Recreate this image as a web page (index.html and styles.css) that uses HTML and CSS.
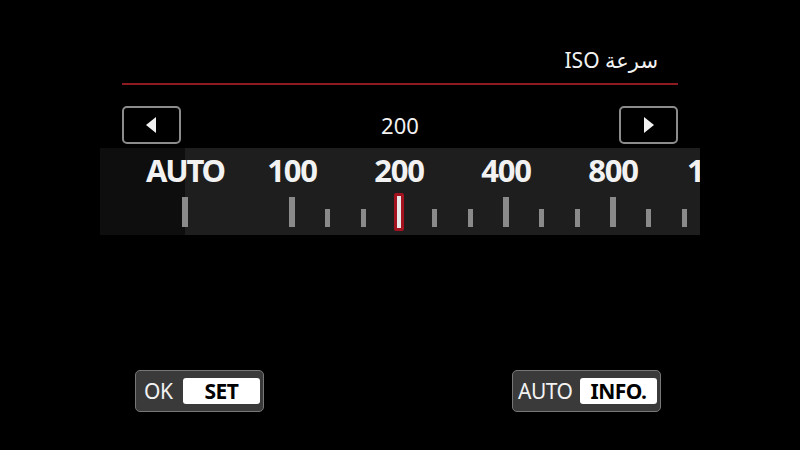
FILE: index.html
```html
<!DOCTYPE html>
<html lang="ar">
  <head>
    <meta charset="utf-8">
    <title>ISO</title>
    <link rel="stylesheet" href="styles.css">
  </head>
  <body>
    <div class="screen">
      <div class="header">
        <span class="title" dir="rtl">سرعة ISO</span>
      </div>
      <div class="nav">
        <div class="arrow-btn"><span class="tri tri-left"></span></div>
        <div class="value">200</div>
        <div class="arrow-btn"><span class="tri tri-right"></span></div>
      </div>
      <div class="band">
        <div class="labels">
          <span class="auto">AUTO</span>
          <span>100</span>
          <span>200</span>
          <span>400</span>
          <span>800</span>
          <span>1600</span>
        </div>
        <div class="ticks">
          <span class="cell"><i class="major"></i></span>
          <span class="cell"></span>
          <span class="cell"></span>
          <span class="cell"><i class="major"></i></span>
          <span class="cell"><i class="minor"></i></span>
          <span class="cell"><i class="minor"></i></span>
          <span class="cell"><i class="cursor"></i></span>
          <span class="cell"><i class="minor"></i></span>
          <span class="cell"><i class="minor"></i></span>
          <span class="cell"><i class="major"></i></span>
          <span class="cell"><i class="minor"></i></span>
          <span class="cell"><i class="minor"></i></span>
          <span class="cell"><i class="major"></i></span>
          <span class="cell"><i class="minor"></i></span>
          <span class="cell"><i class="minor"></i></span>
          <span class="cell"><i class="major"></i></span>
        </div>
      </div>
      <div class="footer">
        <div class="key key-ok">
          <span class="key-label">OK</span>
          <span class="key-box">SET</span>
        </div>
        <div class="key key-auto">
          <span class="key-label">AUTO</span>
          <span class="key-box">INFO.</span>
        </div>
      </div>
    </div>
  </body>
</html>
```

FILE: styles.css
```css
html, body {
  margin: 0;
  padding: 0;
  background: #000;
  color: #f2f2f2;
  font-family: 'Noto Sans', 'DejaVu Sans', sans-serif;
}
.screen {
  width: 800px;
  height: 450px;
  display: flex;
  flex-direction: column;
  overflow: hidden;
}
.header {
  margin: 0 122px;
  padding: 46px 20px 9px 0;
  border-bottom: 2px solid #8e1a22;
  text-align: right;
}
.title {
  font-size: 21px;
  line-height: 28px;
}
.nav {
  margin: 21px 122px 0;
  height: 38px;
  display: flex;
  justify-content: space-between;
  align-items: center;
}
.arrow-btn {
  box-sizing: border-box;
  width: 59px;
  height: 38px;
  border: 2px solid #8c8c8c;
  border-radius: 5px;
  display: flex;
  align-items: center;
  justify-content: center;
}
.tri {
  width: 0;
  height: 0;
  border-top: 8px solid transparent;
  border-bottom: 8px solid transparent;
}
.tri-left {
  border-right: 10px solid #f2f2f2;
  margin-right: 2px;
}
.tri-right {
  border-left: 10px solid #f2f2f2;
  margin-left: 2px;
}
.value {
  font-size: 22px;
  line-height: 38px;
}
.band {
  margin: 4px 0 0 100px;
  width: 600px;
  height: 87px;
  overflow: hidden;
  background: linear-gradient(to right, #0e0e0e 85px, #1e1e1e 85px);
}
.labels {
  display: flex;
  padding: 2px 0 0 31.5px;
  white-space: nowrap;
  font-size: 31px;
  font-weight: 700;
  letter-spacing: -1.2px;
  line-height: 40px;
}
.labels span {
  flex: 0 0 107px;
  text-align: center;
}
.labels .auto {
  letter-spacing: -2.2px;
}
.ticks {
  display: flex;
  align-items: center;
  height: 40px;
  padding: 2px 0 0 67.2px;
}
.cell {
  flex: 0 0 35.67px;
  display: flex;
  justify-content: center;
}
.cell i {
  display: block;
}
.major {
  width: 6px;
  height: 30px;
  background: #8a8a8a;
}
.minor {
  width: 5px;
  height: 18px;
  margin-top: 12px;
  background: #8a8a8a;
}
.cursor {
  box-sizing: border-box;
  width: 10px;
  height: 38px;
  border: 3px solid #a3121f;
  border-radius: 2px;
  background: #e8e8e8;
}
.footer {
  margin-top: auto;
  padding: 0 139px 38px 135px;
  display: flex;
  justify-content: space-between;
}
.key {
  box-sizing: border-box;
  height: 42px;
  display: flex;
  align-items: center;
  padding: 0 3px 0 8px;
  background: #3a3a3a;
  border: 1px solid #777;
  border-radius: 5px;
  font-size: 21px;
}
.key-ok {
  width: 129px;
}
.key-auto {
  width: 149px;
  padding-left: 5px;
}
.key-label {
  color: #f2f2f2;
  letter-spacing: -0.5px;
}
.key-box {
  margin-left: auto;
  width: 77px;
  height: 26px;
  background: #fff;
  color: #000;
  border-radius: 3px;
  font-weight: 700;
  text-align: center;
  line-height: 26px;
  letter-spacing: -0.5px;
}
```
